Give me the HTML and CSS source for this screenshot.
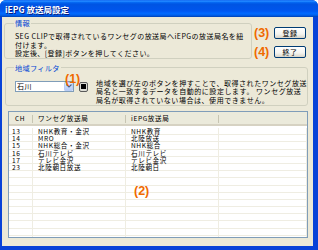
FILE: index.html
```html
<!DOCTYPE html>
<html lang="ja">
<head>
  <meta charset="UTF-8">
  <title>iEPG 放送局設定</title>
  <link rel="stylesheet" href="styles.css">
</head>
<body>

<div class="window">
  <div class="titlebar">
    <span class="title">iEPG 放送局設定</span>
  </div>

  <div class="client">
    <!-- 情報 + ボタン -->
    <div class="top">
      <fieldset class="group info">
        <legend>情報</legend>
        <p>SEG CLIPで取得されているワンセグの放送局へiEPGの放送局名を紐<br>付けます。<br>設定後、[登録]ボタンを押してください。</p>
      </fieldset>
      <div class="actions">
        <div class="action"><span class="mark">(3)</span><button class="btn">登録</button></div>
        <div class="action"><span class="mark">(4)</span><button class="btn">終了</button></div>
      </div>
    </div>

    <!-- 地域フィルタ -->
    <fieldset class="group filter">
      <legend>地域フィルタ</legend>
      <div class="filter-row">
        <div class="combo">
          <span class="combo-text">石川</span>
          <span class="drop">
            <svg width="6" height="4" viewBox="0 0 6 4"><path d="M0.5 0.5 L3 3 L5.5 0.5" fill="none" stroke="#4d6185" stroke-width="1.2"/></svg>
          </span>
        </div>
        <button class="apply"><span class="apply-icon"></span></button>
        <p class="desc">地域を選び左のボタンを押すことで、取得されたワンセグ放送<br>局名と一致するデータを自動的に設定します。 ワンセグ放送<br>局名が取得されていない場合は、使用できません。</p>
      </div>
      <span class="mark m1">(1)</span>
    </fieldset>

    <!-- 一覧 -->
    <div class="list">
      <div class="row head">
        <span>CH</span><span>ワンセグ放送局</span><span>iEPG放送局</span><span></span>
      </div>
      <div class="rows" id="rows"></div>
      <span class="mark m2">(2)</span>
    </div>
  </div>
</div>

<script>
  const data = [
    ["13", "NHK教育・金沢", "NHK教育"],
    ["14", "MRO", "北陸放送"],
    ["15", "NHK総合・金沢", "NHK総合"],
    ["16", "石川テレビ", "石川テレビ"],
    ["17", "テレビ金沢", "テレビ金沢"],
    ["23", "北陸朝日放送", "北陸朝日"]
  ];

  const rows = document.getElementById("rows");
  for (let i = 0; i < 16; i++) {
    const r = document.createElement("div");
    r.className = "row";
    const item = data[i] || ["", "", ""];
    item.concat([""]).forEach(text => {
      const c = document.createElement("span");
      c.textContent = text;
      r.appendChild(c);
    });
    rows.appendChild(r);
  }
</script>

</body>
</html>
```

FILE: styles.css
```css
:root {
  --face: #ece9d8;
  --group-line: #d0d0bf;
  --group-text: #0046d5;
  --mark: #f06a00;
  --grid: #efede2;
}

body {
  margin: 0;
  font-family: "Noto Sans CJK JP", "Noto Sans", sans-serif;
  background: #fff;
}

.window {
  width: 318px;
  height: 250px;
  display: flex;
  flex-direction: column;
  background: #0842d8;
  border-radius: 6px 6px 0 0;
  overflow: hidden;
}

.titlebar {
  height: 17px;
  flex: none;
  display: flex;
  align-items: center;
  padding-left: 5px;
  background: linear-gradient(#0058ee 0%, #3593ff 6%, #127dff 10%, #0262ee 16%, #0054e3 26%, #0055eb 56%, #005bf5 68%, #026afe 78%, #0062ef 88%, #0052d6 94%, #0040ab 100%);
}

.title {
  color: #fff;
  font-size: 8.5px;
  font-weight: bold;
  line-height: 10px;
  text-shadow: 1px 1px 0 #0a1e80;
}

.client {
  flex: 1;
  margin: 0 5px 4px 2px;
  background: var(--face);
  display: flex;
  flex-direction: column;
}

.top {
  display: flex;
  align-items: flex-start;
}

.group {
  margin: 0;
  border: 1px solid var(--group-line);
  border-radius: 3px;
  min-width: 0;
}

.group legend {
  color: var(--group-text);
  font-size: 7.2px;
  letter-spacing: 0.3px;
  line-height: 8px;
  padding: 0 1px;
  margin-left: -1px;
}

.info {
  width: 248px;
  box-sizing: border-box;
  margin: 2px 0 0 2px;
  padding: 5px 0 0 10px;
}

.info p,
.desc {
  margin: 0;
  font-size: 7px;
  letter-spacing: 0.55px;
  line-height: 8.5px;
  white-space: nowrap;
  color: #000;
}

.info p {
  letter-spacing: 0.45px;
}

.actions {
  margin: 10px 0 0 2px;
  display: flex;
  flex-direction: column;
  gap: 7px;
}

.action {
  display: flex;
  align-items: center;
  gap: 3px;
}

.mark {
  color: var(--mark);
  font-family: "Liberation Sans", Arial, sans-serif;
  font-weight: bold;
  font-size: 12.5px;
  line-height: 12px;
  width: 17px;
}

.btn {
  width: 32px;
  height: 12px;
  padding: 0;
  border: 1px solid #003c74;
  border-radius: 2px;
  background: linear-gradient(#fff, #f4f4f0 60%, #d8d4c8);
  font-family: inherit;
  font-size: 7px;
  letter-spacing: 0.5px;
  line-height: 10px;
  color: #000;
}

.filter {
  position: relative;
  width: 303px;
  box-sizing: border-box;
  margin: 5px 0 0 3px;
  padding: 3px 0 1px 9px;
}

.filter-row {
  display: flex;
  align-items: flex-start;
}

.combo {
  width: 60px;
  height: 11px;
  box-sizing: border-box;
  margin-top: 6px;
  border: 1px solid #7f9db9;
  background: #fff;
  display: flex;
  align-items: center;
  justify-content: space-between;
}

.combo-text {
  font-size: 7px;
  letter-spacing: 0.5px;
  line-height: 9px;
  padding-left: 1px;
}

.drop {
  width: 9px;
  height: 9px;
  box-sizing: border-box;
  border: 1px solid #b9cdf5;
  border-radius: 1px;
  background: linear-gradient(#dce8fe, #b6cbf9);
  display: flex;
  align-items: center;
  justify-content: center;
}

.apply {
  width: 9px;
  height: 10px;
  padding: 0;
  margin: 7px 0 0 5px;
  border: 1px solid #5a5a5a;
  border-radius: 2px;
  background: #dcdcd4;
  display: flex;
  align-items: center;
  justify-content: center;
}

.apply-icon {
  width: 5px;
  height: 5px;
  background: #000;
}

.desc {
  margin: 4px 0 0 8px;
}

.m1 {
  position: absolute;
  left: 59px;
  top: 1px;
}

.list {
  position: relative;
  height: 127px;
  box-sizing: border-box;
  margin: 5px 0 0 6px;
  width: 300px;
  border: 1px solid #7f9db9;
  background: #fff;
  overflow: hidden;
}

.rows {
  padding-top: 2px;
}

.row {
  display: grid;
  grid-template-columns: 24px 93px 93px 1fr;
  height: 7.2px;
  font-size: 6.6px;
  letter-spacing: 0.6px;
  line-height: 7.2px;
  color: #000;
  background: linear-gradient(var(--grid), var(--grid)) left bottom / 100% 1px no-repeat;
}

.row span {
  white-space: nowrap;
  padding-left: 5px;
  background: linear-gradient(var(--grid), var(--grid)) right top / 1px 100% no-repeat;
}

.row span:first-child {
  padding-left: 3px;
}

.row.head {
  height: 14px;
  background: #ebeadb;
  box-shadow: inset 0 -2px 0 #d6d2c2, inset 0 -1px 0 #cbc7b8;
  line-height: 12px;
}

.row.head span {
  background: linear-gradient(#c7c5b2, #c7c5b2) right 3px / 1px 8px no-repeat;
}

.row.head span:first-child {
  padding-left: 6px;
}

.row.head span:last-child {
  background: none;
}

.m2 {
  position: absolute;
  left: 125px;
  top: 73px;
}
```
